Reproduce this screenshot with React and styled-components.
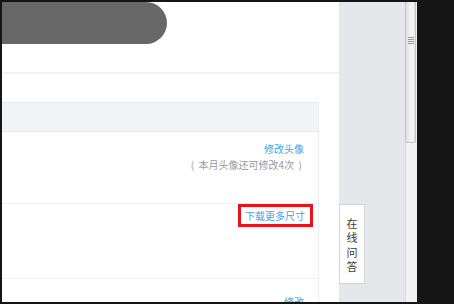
import React from "react";
import styled, { createGlobalStyle } from "styled-components";

const GlobalStyle = createGlobalStyle`
  html, body {
    margin: 0;
    padding: 0;
    background: #151515;
  }
  body {
    font-family: "Noto Sans CJK SC", "Noto Sans", "Liberation Sans", sans-serif;
  }
`;

const Frame = styled.div`
  width: 454px;
  height: 304px;
  box-sizing: border-box;
  padding: 2px 0 2px 2px;
  background: #151515;
  display: flex;
  overflow: hidden;
`;

const Main = styled.div`
  position: relative;
  width: 337px;
  background: #fff;
  display: flex;
  flex-direction: column;
  overflow: hidden;
`;

// grey toast floating over the top left corner
const Toast = styled.div`
  position: absolute;
  top: 0;
  left: 0;
  width: 165px;
  height: 42px;
  background: #676767;
  border-radius: 0 21px 21px 0;
`;

const TopBar = styled.div`
  height: 70px;
  flex-shrink: 0;
  border-bottom: 2px solid #f2f2f3;
`;

const Card = styled.div`
  margin-top: 28px;
  width: 316px;
  border-right: 1px solid #eceef1;
  display: flex;
  flex-direction: column;
`;

const CardHeader = styled.div`
  height: 28px;
  flex-shrink: 0;
  background: #f3f4f7;
  border-top: 1px solid #e9eaee;
  border-bottom: 1px solid #e9eaee;
`;

const Row = styled.div`
  height: ${({ h }) => h}px;
  flex-shrink: 0;
  border-bottom: 1px solid #efeff1;
  display: flex;
  flex-direction: column;
  align-items: flex-end;
  padding: ${({ pt }) => pt || 0}px ${({ pr }) => pr || 14}px 0 0;
  box-sizing: border-box;
`;

const Link = styled.a`
  font-size: 10px;
  line-height: 16px;
  color: #4a9de6;
  text-decoration: none;
  cursor: pointer;
`;

const Marked = styled(Link)`
  line-height: 17px;
  border: 3px solid #e8141c;
  padding: 0 5px 0 4px;
`;

const Hint = styled.div`
  font-size: 10px;
  line-height: 16px;
  color: #9a9a9a;
  white-space: pre;
  margin-right: 2px;
`;

const Side = styled.div`
  width: 66px;
  background: #e6e7eb;
  padding-top: 202px;
  box-sizing: border-box;
`;

const HelpTab = styled.div`
  width: 26px;
  height: 80px;
  box-sizing: border-box;
  background: #fff;
  border: 1px solid #d4d5d8;
  padding-top: 11px;
  display: flex;
  flex-direction: column;
  align-items: center;
  font-size: 11px;
  line-height: 14.4px;
  color: #3a3a3a;
`;

const Track = styled.div`
  width: 12px;
  background: #f2f2f2;
  border-left: 1px solid #dcdcdc;
  box-sizing: border-box;
`;

const Thumb = styled.div`
  height: 141px;
  margin-left: -1px;
  width: 11px;
  box-sizing: border-box;
  border: 1px solid #c4c4c4;
  border-top: none;
  border-radius: 0 0 2px 2px;
  background: linear-gradient(to right, #dedede, #efefef 40%, #f7f7f7 70%, #e2e2e2);
  display: flex;
  flex-direction: column;
  align-items: center;
  gap: 1px;
  padding-top: 35px;
`;

const Grip = styled.div`
  width: 6px;
  height: 1px;
  background: #9a9a9a;
`;

export default function App() {
  return (
    <>
      <GlobalStyle />
      <Frame>
        <Main>
          <TopBar />
          <Card>
            <CardHeader />
            <Row h={72} pt={9}>
              <Link>修改头像</Link>
              <Hint>(  本月头像还可修改4次  )</Hint>
            </Row>
            <Row h={75} pr={5}>
              <Marked>下载更多尺寸</Marked>
            </Row>
            <Row h={40} pt={15}>
              <Link>修改</Link>
            </Row>
          </Card>
          <Toast />
        </Main>
        <Side>
          <HelpTab>
            <span>在</span>
            <span>线</span>
            <span>问</span>
            <span>答</span>
          </HelpTab>
        </Side>
        <Track>
          <Thumb>
            <Grip />
            <Grip />
            <Grip />
            <Grip />
          </Thumb>
        </Track>
      </Frame>
    </>
  );
}
